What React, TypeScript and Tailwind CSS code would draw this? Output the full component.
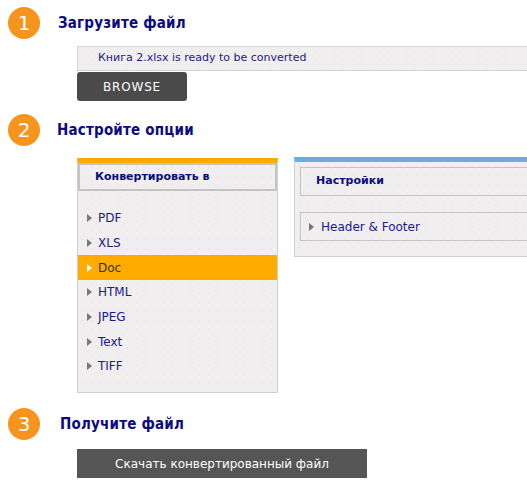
import React from "react";

const font = { fontFamily: '"DejaVu Sans", Verdana, sans-serif' };
const headFont = { fontFamily: '"DejaVu Sans Condensed", "DejaVu Sans", Verdana, sans-serif' };

function Step({ n }: { n: string }) {
  return (
    <div className="w-[32px] h-[32px] rounded-full bg-[#f7941d] text-white flex items-center justify-center text-[20px] leading-none shrink-0">
      {n}
    </div>
  );
}

function Tri({ color = "#777" }: { color?: string }) {
  return (
    <svg width="5" height="8" viewBox="0 0 5 8" className="shrink-0">
      <path d="M0 0 L5 4 L0 8 Z" fill={color} />
    </svg>
  );
}

const dots =
  "bg-[#f0eeee] bg-[radial-gradient(#f3d6d6_0.6px,transparent_0.7px)] bg-[length:9px_9px]";

export default function App() {
  const items = ["PDF", "XLS", "Doc", "HTML", "JPEG", "Text", "TIFF"];
  return (
    <div className="w-[527px] h-[489px] bg-white overflow-hidden relative" style={font}>
      {/* Step 1 */}
      <div className="flex items-center h-[32px] mt-[7px] pl-[8px]">
        <Step n="1" />
        <div className="ml-[18px] text-[15px] font-bold text-[#0c0c80] tracking-[0.2px]" style={headFont}>
          Загрузите файл
        </div>
      </div>
      <div className="ml-[77px] mt-[7px]">
        <div className={`h-[25px] w-[460px] border border-[#d6d6d6] ${dots} flex items-center pl-[20px] text-[11px] text-[#1a1a8c]`}>
          Книга 2.xlsx is ready to be converted
        </div>
        <div className="mt-[1px] w-[110px] h-[29px] bg-[#4b4b4b] rounded-[3px] text-white text-[12px] flex items-center justify-center tracking-[0.8px]">
          BROWSE
        </div>
      </div>

      {/* Step 2 */}
      <div className="flex items-center h-[32px] mt-[13px] pl-[8px]">
        <Step n="2" />
        <div className="ml-[17px] text-[15px] font-bold text-[#0c0c80] tracking-[0.2px]" style={headFont}>
          Настройте опции
        </div>
      </div>
      <div className="flex items-start mt-[12px] ml-[77px] gap-[16px]">
        <div className={`w-[201px] h-[235px] shrink-0 border-t-[5px] border-t-[#ffab00] border-l border-r border-b border-[#cfcfcf] ${dots}`}>
          <div className="h-[28px] border-2 border-[#c4c4c4] flex items-center pl-[15px] text-[11px] font-bold text-[#0c0c80]">
            Конвертировать в
          </div>
          <div className="pt-[15px]">
            {items.map((it) => {
              const active = it === "Doc";
              return (
                <div
                  key={it}
                  className={`h-[24.7px] flex items-center pl-[9px] gap-[6px] text-[12px] ${
                    active ? "bg-[#ffab00] text-[#333]" : "text-[#1a1a8c]"
                  }`}
                >
                  <Tri color={active ? "#fff" : "#777"} />
                  <span>{it}</span>
                </div>
              );
            })}
          </div>
        </div>
        <div className={`w-[240px] h-[100px] shrink-0 -mt-[1px] border-t-[5px] border-t-[#6aaee0] border-l border-b border-[#cfcfcf] ${dots} pl-[5px] pt-[5px]`}>
          <div className="h-[29px] border border-[#c4c4c4] flex items-center pl-[15px] text-[11px] font-bold text-[#0c0c80]">
            Настройки
          </div>
          <div className="mt-[16px] h-[29px] border border-[#c4c4c4] flex items-center pl-[8px] gap-[7px] text-[12px] text-[#1a1a8c]">
            <Tri />
            <span>Header &amp; Footer</span>
          </div>
        </div>
      </div>

      {/* Step 3 */}
      <div className="flex items-center h-[32px] mt-[15px] pl-[8px]">
        <Step n="3" />
        <div className="ml-[20px] text-[15px] font-bold text-[#0c0c80] tracking-[0.2px]" style={headFont}>
          Получите файл
        </div>
      </div>
      <div className="ml-[77px] mt-[9px] w-[290px] h-[29px] bg-[#555555] text-white text-[12px] flex items-center justify-center">
        Скачать конвертированный файл
      </div>
    </div>
  );
}
